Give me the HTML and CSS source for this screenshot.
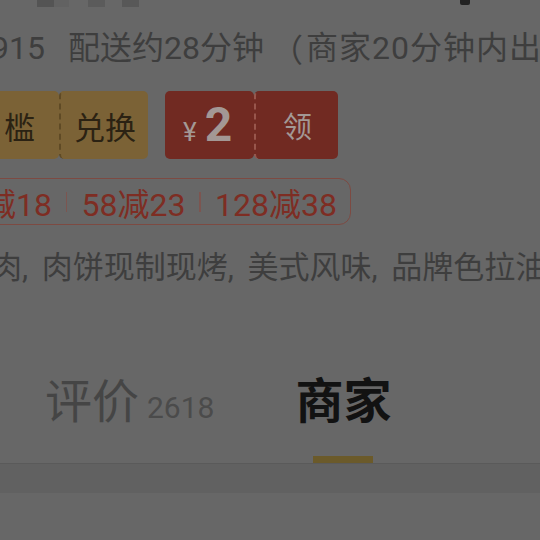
FILE: index.html
```html
<!DOCTYPE html>
<html lang="zh">
<head>
<meta charset="utf-8">
<link rel="stylesheet" href="styles.css">
</head>
<body>
<div class="page">
  <div class="status">
    <span class="blk b1"></span><span class="blk b2"></span><span class="blk b3"></span><span class="blk b4"></span>
    <span class="blk b5"></span>
  </div>
  <div class="line1"><span class="num">915</span><span class="deliver">配送约28分钟</span><span class="paren">（</span><span class="deliver2">商家20分钟内出</span></div>
  <div class="coupons">
    <div class="coupon gold">
      <div class="seg seg-a">槛</div>
      <div class="seg seg-b">兑换</div>
    </div>
    <div class="coupon red">
      <div class="seg seg-a"><span class="yen">¥</span><span class="amt">2</span></div>
      <div class="seg seg-b">领</div>
    </div>
  </div>
  <div class="pill">
    <span class="disc">减18</span><span class="sep"></span><span class="disc">58减23</span><span class="sep"></span><span class="disc">128减38</span>
  </div>
  <div class="desc">肉, 肉饼现制现烤, 美式风味, 品牌色拉油</div>
  <div class="tabs">
    <div class="tab"><div class="tab-label"><span class="t-name">评价</span><span class="t-count">2618</span></div></div>
    <div class="tab active"><div class="tab-label"><span class="t-name">商家</span></div><div class="bar"></div></div>
  </div>
  <div class="band"></div>
</div>
</body>
</html>
```
FILE: styles.css
```css
html, body { margin: 0; padding: 0; }
body {
  background: #676767;
  width: 540px;
  height: 540px;
  overflow: hidden;
  font-family: Roboto, "Noto Sans CJK SC", sans-serif;
}
.page { display: flex; flex-direction: column; }

.status { height: 7px; display: flex; }
.blk { height: 7px; display: block; }
.b1 { margin-left: 37px; width: 17px; background: #545454; }
.b2 { width: 15px; background: #626262; }
.b3 { margin-left: 19px; width: 17px; background: #5b5b5b; }
.b4 { margin-left: 17px; width: 17px; background: #585858; }
.b5 { margin-left: 321px; width: 10px; height: 5px; background: #222; border-radius: 0 0 2px 2px; }

.line1 {
  margin-top: 21px;
  height: 40px;
  line-height: 40px;
  font-size: 32px;
  color: #3e3e3e;
  white-space: nowrap;
  display: flex;
}
.num { margin-left: -9px; }
.deliver { margin-left: 23px; }
.paren { margin-left: 7px; font-family: "Noto Sans CJK SC", sans-serif; }
.deliver2 { margin-left: 3px; letter-spacing: 1px; }

.coupons {
  margin-top: 23px;
  display: flex;
  gap: 17px;
  height: 68px;
}
.coupon { display: flex; }
.seg {
  display: flex;
  align-items: center;
  justify-content: center;
  border-radius: 5px;
  height: 68px;
  box-sizing: border-box;
}
.gold { margin-left: -10px; }
.gold .seg { background: #7b6236; color: #2b2213; font-size: 31px; }
.gold .seg-a { width: 69px; justify-content: flex-start; padding-left: 14px; }
.gold .seg-b { width: 89px; border-left: 2px dashed #5f4a25; padding-left: 1px; }
.red .seg { background: #712a22; color: #a39895; }
.red .seg-a { width: 89px; align-items: baseline; justify-content: flex-start; padding-top: 10px; padding-left: 18px; }
.red .seg-b { width: 84px; border-left: 2px dashed #98564c; font-size: 29px; padding-left: 1px; }
.yen { font-size: 26px; margin-right: 8px; }
.amt { font-size: 48px; font-weight: 700; line-height: 48px; }

.pill {
  align-self: flex-start;
  margin-top: 19px;
  margin-left: -18px;
  height: 47px;
  box-sizing: border-box;
  border: 1.5px solid #7d4a42;
  border-radius: 12px;
  display: flex;
  align-items: center;
  padding-left: 1px;
  padding-right: 13px;
  color: #7e2d23;
  font-size: 32px;
  white-space: nowrap;
}
.sep { width: 1.5px; height: 20px; background: #7c5550; margin: 0 14px; }

.desc {
  margin-top: 23px;
  height: 40px;
  line-height: 40px;
  font-size: 31px;
  word-spacing: 6px;
  color: #3e3e3e;
  white-space: nowrap;
  margin-left: -9px;
}

.tabs {
  margin-top: 84px;
  display: flex;
  gap: 81px;
  padding-left: 45px;
  height: 91px;
  border-bottom: 1px solid #5a5a5a;
}
.tab { display: flex; flex-direction: column; align-items: center; }
.tab-label { height: 60px; display: flex; align-items: baseline; white-space: nowrap; line-height: 60px; }
.t-name { font-size: 47px; color: #454545; }
.t-count { font-size: 30px; color: #4b4b4b; margin-left: 8px; }
.active .t-name { font-size: 48px; font-weight: 700; color: #121212; }
.bar { margin-top: 24px; width: 60px; height: 7px; background: #6b5a2a; }

.band { height: 29px; background: #616161; }
```
